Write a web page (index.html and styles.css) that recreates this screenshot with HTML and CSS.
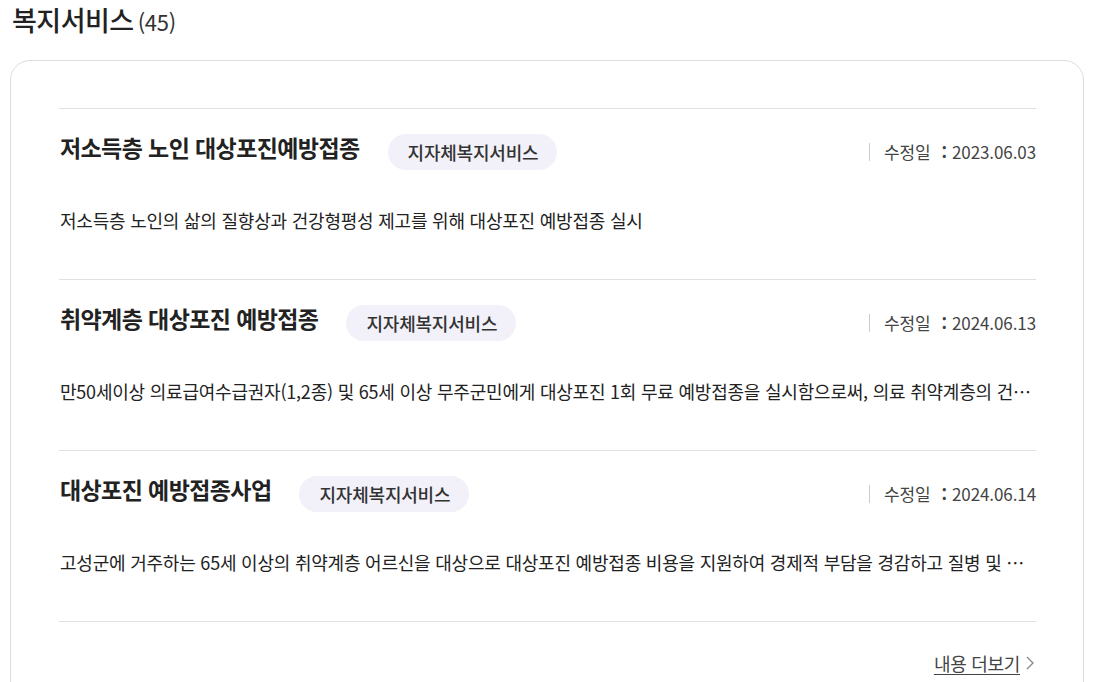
FILE: index.html
```html
<!DOCTYPE html>
<html lang="ko">
<head>
    <meta charset="UTF-8">
    <meta name="viewport" content="width=device-width, initial-scale=1.0">
    <title>복지서비스</title>
    <link rel="stylesheet" href="styles.css">
</head>
<body>
    <!-- 복지서비스 목록 -->
    <h2 class="section-title">복지서비스<span class="count">(45)</span></h2>

    <div class="card">
        <ul class="service-list">
            <li class="service-item">
                <div class="service-head">
                    <h3 class="service-name">저소득층 노인 대상포진예방접종</h3>
                    <span class="badge">지자체복지서비스</span>
                    <span class="date">수정일<span class="colon">:</span>2023.06.03</span>
                </div>
                <p class="service-desc">저소득층 노인의 삶의 질향상과 건강형평성 제고를 위해 대상포진 예방접종 실시</p>
            </li>
            <li class="service-item">
                <div class="service-head">
                    <h3 class="service-name">취약계층 대상포진 예방접종</h3>
                    <span class="badge">지자체복지서비스</span>
                    <span class="date">수정일<span class="colon">:</span>2024.06.13</span>
                </div>
                <p class="service-desc">만50세이상 의료급여수급권자(1,2종) 및 65세 이상 무주군민에게 대상포진 1회 무료 예방접종을 실시함으로써, 의료 취약계층의 건강증진 및 질병예방에 기여</p>
            </li>
            <li class="service-item">
                <div class="service-head">
                    <h3 class="service-name">대상포진 예방접종사업</h3>
                    <span class="badge">지자체복지서비스</span>
                    <span class="date">수정일<span class="colon">:</span>2024.06.14</span>
                </div>
                <p class="service-desc">고성군에 거주하는 65세 이상의 취약계층 어르신을 대상으로 대상포진 예방접종 비용을 지원하여 경제적 부담을 경감하고 질병 및 합병증을 예방</p>
            </li>
        </ul>

        <div class="more">
            <a href="#" class="more-link">내용 더보기</a>
            <svg class="chevron" width="8" height="14" viewBox="0 0 8 14">
                <path d="M1 1l6 6-6 6" fill="none" stroke="#888" stroke-width="1.3"/>
            </svg>
        </div>
    </div>
</body>
</html>
```

FILE: styles.css
```css
body {
    margin: 0;
    padding: 0 10px;
    font-family: "Noto Sans CJK KR", "Noto Sans", sans-serif;
    color: #222;
    background-color: #fff;
}

.section-title {
    display: flex;
    align-items: baseline;
    height: 40px;
    margin: 0 0 20px 2px;
    font-size: 27px;
    line-height: 40px;
    font-weight: 500;
    letter-spacing: -0.5px;
    color: #222;
}

.count {
    margin-left: 4px;
    font-size: 22px;
    font-weight: 400;
    letter-spacing: -0.3px;
    color: #333;
}

.card {
    border: 1px solid #ddd;
    border-radius: 20px;
    padding: 47px 47px 0 48px;
    height: 700px;
}

.service-list {
    list-style: none;
    margin: 0;
    padding: 0;
}

.service-item {
    border-top: 1px solid #e0e0e0;
    padding: 23px 0 46px 1px;
}

.service-head {
    display: flex;
    align-items: flex-start;
}

.service-name {
    margin: 0;
    font-size: 23px;
    line-height: 30px;
    font-weight: 700;
    letter-spacing: -0.6px;
    color: #222;
}

.badge {
    margin: 2px 0 0 28px;
    padding: 0 19px 0 20px;
    height: 36px;
    line-height: 36px;
    border-radius: 18px;
    background-color: #f2f1f9;
    font-size: 18px;
    font-weight: 500;
    letter-spacing: -0.2px;
    color: #333;
}

.date {
    margin: 11px 0 0 auto;
    padding-left: 14px;
    border-left: 1px solid #ccc;
    font-size: 17px;
    line-height: 18px;
    height: 18px;
    letter-spacing: -0.1px;
    color: #444;
}

.colon {
    margin: 0 5px 0 11px;
    font-weight: 700;
}

.service-desc {
    margin: 37px 0 0;
    font-size: 18px;
    line-height: 26px;
    letter-spacing: -0.22px;
    color: #222;
    white-space: nowrap;
    overflow: hidden;
    text-overflow: ellipsis;
}

.more {
    border-top: 1px solid #e0e0e0;
    display: flex;
    justify-content: flex-end;
    align-items: center;
    gap: 6px;
    padding-top: 28px;
}

.more-link {
    font-size: 18px;
    line-height: 26px;
    letter-spacing: -0.3px;
    color: #444;
    text-decoration: underline;
    text-underline-offset: 3px;
}

.chevron {
    margin-right: 2px;
}
```
